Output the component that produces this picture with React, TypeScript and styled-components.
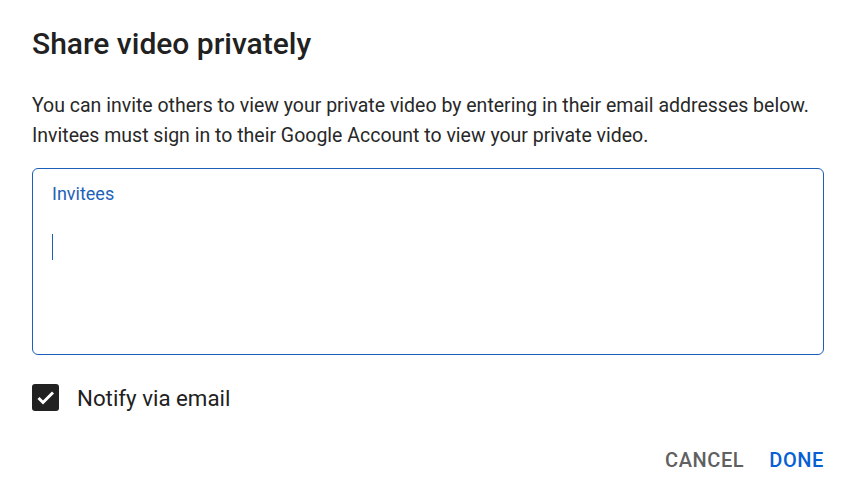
import styled, { createGlobalStyle } from "styled-components";

const GlobalStyle = createGlobalStyle`
  body {
    margin: 0;
    background: #ffffff;
    font-family: Roboto, "Noto Sans", Arial, sans-serif;
  }
`;

const Dialog = styled.div`
  width: 855px;
  height: 496px;
  box-sizing: border-box;
  padding: 24px 31px 0 32px;
  display: flex;
  flex-direction: column;
`;

const Title = styled.h1`
  margin: 0;
  font-size: 30px;
  font-weight: 500;
  line-height: 40px;
  color: #212121;
`;

const Description = styled.p`
  margin: 27px 0 0;
  font-size: 19.5px;
  line-height: 30px;
  color: #282828;
`;

const InviteeBox = styled.div`
  margin-top: 17px;
  height: 187px;
  box-sizing: border-box;
  border: 1px solid #1c5fb8;
  border-radius: 6px;
  padding: 13px 19px;
  display: flex;
  flex-direction: column;
`;

const BoxLabel = styled.label`
  font-size: 18px;
  line-height: 24px;
  color: #1c62b9;
`;

const Caret = styled.span`
  margin-top: 28px;
  width: 1px;
  height: 26px;
  background: #1c5fb8;
`;

const CheckRow = styled.label`
  margin-top: 29px;
  display: flex;
  align-items: center;
  gap: 18px;
  font-size: 22.3px;
  color: #212121;
`;

const CheckBox = styled.span`
  width: 27px;
  height: 27px;
  border-radius: 3px;
  background: #212121;
  display: flex;
  align-items: center;
  justify-content: center;
`;

const Actions = styled.div`
  margin-top: 37px;
  display: flex;
  justify-content: flex-end;
  gap: 25px;
`;

const ActionButton = styled.button<{ $primary?: boolean }>`
  border: none;
  background: none;
  padding: 0;
  font-family: inherit;
  font-size: 20px;
  font-weight: 500;
  letter-spacing: 0.6px;
  color: ${(p) => (p.$primary ? "#065fd4" : "#606060")};
  cursor: pointer;
`;

export default function App() {
  return (
    <>
      <GlobalStyle />
      <Dialog>
        <Title>Share video privately</Title>
        <Description>
          You can invite others to view your private video by entering in their email addresses below.
          <br />
          Invitees must sign in to their Google Account to view your private video.
        </Description>
        <InviteeBox>
          <BoxLabel>Invitees</BoxLabel>
          <Caret />
        </InviteeBox>
        <CheckRow>
          <CheckBox>
            <svg width="27" height="27" viewBox="0 0 27 27">
              <path d="M6.5 14l4.5 4.5 10-10" fill="none" stroke="#fff" strokeWidth="3" />
            </svg>
          </CheckBox>
          Notify via email
        </CheckRow>
        <Actions>
          <ActionButton>CANCEL</ActionButton>
          <ActionButton $primary>DONE</ActionButton>
        </Actions>
      </Dialog>
    </>
  );
}
